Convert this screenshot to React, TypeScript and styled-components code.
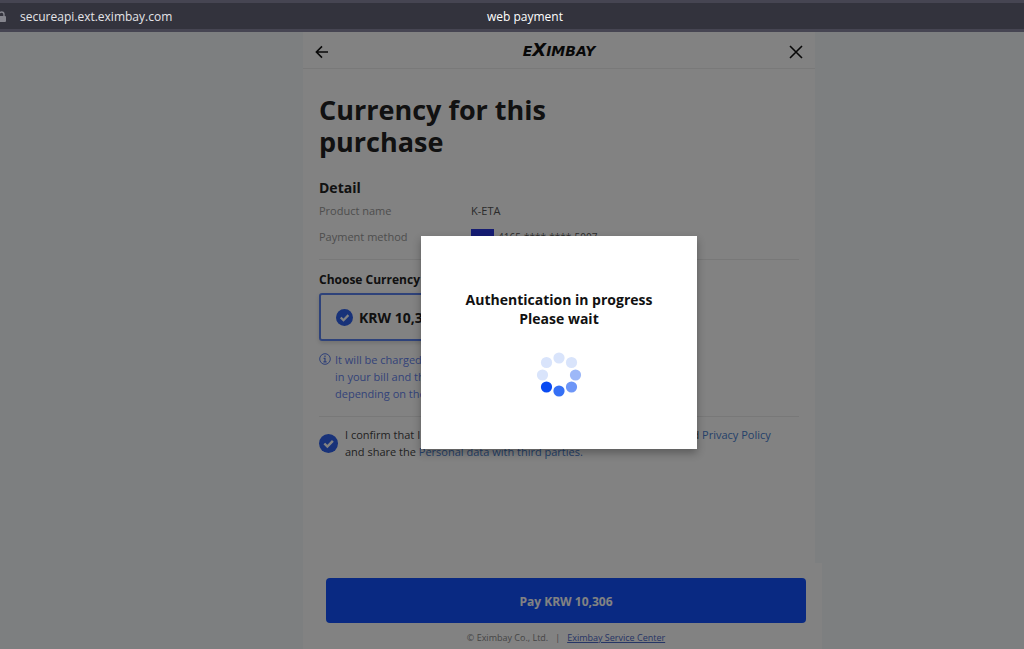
import React from "react";
import styled, { createGlobalStyle } from "styled-components";

const GlobalStyle = createGlobalStyle`
  * { box-sizing: border-box; }
  body {
    margin: 0;
    font-family: "Open Sans", "Noto Sans", sans-serif;
    color: #222;
  }
  h1, h2, p, dl, dd { margin: 0; }
`;

const Window = styled.div`
  display: flex;
  flex-direction: column;
  min-height: 100vh;
  overflow: hidden;
`;

const AddressBar = styled.header`
  display: grid;
  grid-template-columns: 1fr auto 1fr;
  align-items: center;
  height: 32px;
  padding: 2px 0 0 26px;
  border-top: 3px solid #464552;
  border-bottom: 3px solid #464552;
  background: #33333d;
  color: #e4e4e8;
  font-size: 12px;
  line-height: 16px;
`;

const Address = styled.div`
  display: flex;
  align-items: center;
  gap: 13px;
  margin-left: -27px;
`;

const TabTitle = styled.span`
  color: #fff;
`;

const Viewport = styled.div`
  position: relative;
  display: flex;
  flex: 1;
  justify-content: center;
  padding-left: 94px;
  background: #f6f9fc;
`;

const Panel = styled.main`
  display: flex;
  flex-direction: column;
  width: 100%;
  max-width: 512px;
  background: #fff;
`;

const PanelHeader = styled.div`
  display: flex;
  align-items: center;
  justify-content: space-between;
  height: 37px;
  padding: 4px 11px 0;
  border-bottom: 1px solid #eee;
`;

const IconButton = styled.button`
  display: flex;
  padding: 0;
  border: 0;
  background: none;
  color: #111;
`;

const Logo = styled.span`
  padding-bottom: 3px;
  font: italic bold 14px/18px "DejaVu Sans", sans-serif;
  color: #111;
`;

const LogoX = styled.span`
  font-size: 18px;
`;

const Content = styled.div`
  flex: 1;
  padding: 25px 16px 0;
`;

const Title = styled.h1`
  max-width: 260px;
  font-size: 27px;
  line-height: 32px;
  font-weight: 700;
`;

const SectionTitle = styled.h2<{ $small?: boolean }>`
  font-size: ${(p) => (p.$small ? 12 : 14)}px;
  line-height: 20px;
  font-weight: 700;
`;

const Section = styled.section<{ $top: number }>`
  padding-top: ${(p) => p.$top}px;
  padding-bottom: 14px;
  border-bottom: 1px solid #ececec;
`;

const Details = styled.dl`
  display: grid;
  grid-template-columns: 152px 1fr;
  row-gap: 10px;
  padding-top: 5px;
  font-size: 11px;
  line-height: 16px;
`;

const Label = styled.dt`
  color: #999;
`;

const Value = styled.dd`
  display: flex;
  gap: 4px;
  color: #555;
`;

const CardNumber = styled.span`
  font-size: 10px;
`;

const CardBadge = styled.span`
  width: 23px;
  height: 15px;
  background: #2a38e0;
`;

const CurrencyCard = styled.label`
  display: flex;
  align-items: center;
  gap: 6px;
  width: 50%;
  height: 48px;
  margin-top: 3px;
  padding: 0 15px;
  border: 2px solid #5a82f0;
  border-radius: 3px;
  font-size: 14px;
  font-weight: 700;
  box-shadow: 0 2px 4px rgba(0, 0, 0, 0.15);
`;

const Tick = styled.span`
  position: relative;
  display: flex;
  flex: none;

  input {
    position: absolute;
    inset: 0;
    margin: 0;
    width: 100%;
    height: 100%;
    opacity: 0;
  }
`;

const Notice = styled.div`
  display: flex;
  gap: 4px;
  padding-top: 10px;
  color: #6684ee;
  font-size: 11px;
  line-height: 17px;
  white-space: nowrap;

  svg { flex: none; margin-top: 2px; }
`;

const Consent = styled.div`
  display: flex;
  align-items: center;
  gap: 7px;
  padding-top: 9px;
  color: #444;
  font-size: 11px;
  line-height: 17px;
  white-space: nowrap;
`;

const TextLink = styled.a`
  color: #4a80d0;
  text-decoration: none;
`;

const Footer = styled.footer`
  margin: 0 -7px 0 7px;
  padding: 15px 16px 3px;
  background: #fff;
  text-align: center;
`;

const PayButton = styled.button`
  display: block;
  width: 100%;
  height: 45px;
  padding: 2px 0 0;
  border: 0;
  border-radius: 4px;
  background: #1252ff;
  color: #fff;
  font: 700 12px/18px "Open Sans", sans-serif;
`;

const Legal = styled.p`
  display: flex;
  justify-content: center;
  gap: 7px;
  padding-top: 7px;
  color: #888;
  font-size: 9px;
  line-height: 16px;

  a { color: #4a68c8; }
`;

const Overlay = styled.div`
  position: absolute;
  inset: 0;
  display: flex;
  align-items: center;
  justify-content: center;
  padding: 4px 0 0 94px;
  background: rgba(0, 0, 0, 0.49);
`;

const Dialog = styled.div`
  display: flex;
  flex-direction: column;
  align-items: center;
  gap: 24px;
  width: 276px;
  padding: 54px 16px 51px;
  background: #fff;
  color: #111;
  text-align: center;
  font-size: 14px;
  line-height: 19px;
  font-weight: 700;
  box-shadow: 0 4px 8px rgba(0, 0, 0, 0.3);
`;

const CheckMark = ({ size }: { size: number }) => (
  <svg width={size} height={size} viewBox="0 0 20 20" aria-hidden="true">
    <circle cx="10" cy="10" r="10" fill="#2f62ee" />
    <path d="M5.6 10l3.2 3.2 5.8-6" fill="none" stroke="#fff" strokeWidth="2.6" />
  </svg>
);

const dots: [number, number, string][] = [
  [23, 6, "#d9e4fb"],
  [35.5, 10.5, "#d9e4fb"],
  [39.5, 23, "#9db8f8"],
  [35.5, 35, "#6e96f7"],
  [23, 39, "#3570f5"],
  [10.5, 35, "#0a4bf2"],
  [6.5, 23, "#d9e4fb"],
  [10.5, 10.5, "#d9e4fb"],
];

export default function App() {
  return (
    <Window>
      <GlobalStyle />
      <AddressBar>
        <Address>
          <svg width="8" height="12" viewBox="0 0 8 12" aria-hidden="true">
            <path d="M0 5V3.5a2.5 2.5 0 0 1 5 0V5" fill="none" stroke="#85858d" strokeWidth="1.4" />
            <rect x="-2" y="5" width="9" height="6" rx="1" fill="#85858d" />
          </svg>
          secureapi.ext.eximbay.com
        </Address>
        <TabTitle>web payment</TabTitle>
      </AddressBar>
      <Viewport>
        <Panel>
          <PanelHeader>
            <IconButton aria-label="Back">
              <svg width="16" height="16" viewBox="0 0 16 16" fill="none" stroke="currentColor" strokeWidth="1.6">
                <path d="M14 8H2.5M8 2.4L2.4 8 8 13.6" />
              </svg>
            </IconButton>
            <Logo>
              E<LogoX>X</LogoX>IMBAY
            </Logo>
            <IconButton aria-label="Close">
              <svg width="16" height="16" viewBox="0 0 16 16" fill="none" stroke="currentColor" strokeWidth="1.6">
                <path d="M2 2l12 12M14 2L2 14" />
              </svg>
            </IconButton>
          </PanelHeader>
          <Content>
            <Title>Currency for this purchase</Title>
            <Section $top={20}>
              <SectionTitle>Detail</SectionTitle>
              <Details>
                <Label>Product name</Label>
                <Value>K-ETA</Value>
                <Label>Payment method</Label>
                <Value>
                  <CardBadge />
                  <CardNumber>4165-****-****-5007</CardNumber>
                </Value>
              </Details>
            </Section>
            <Section $top={10}>
              <SectionTitle $small>Choose Currency</SectionTitle>
              <CurrencyCard>
                <Tick>
                  <input type="radio" name="currency" defaultChecked />
                  <CheckMark size={17} />
                </Tick>
                KRW 10,306
              </CurrencyCard>
              <Notice>
                <svg width="12" height="12" viewBox="0 0 12 12" fill="none" stroke="#5a7cec" aria-hidden="true">
                  <circle cx="6" cy="6" r="5.3" />
                  <path d="M6 2.6v1.3M4.6 5.3H6v3.4M4.4 8.9h3.2" strokeWidth="1.2" />
                </svg>
                <p>
                  It will be charged in the selected currency
                  <br />
                  in your bill and the amount may change
                  <br />
                  depending on the exchange rate.
                </p>
              </Notice>
            </Section>
            <Consent>
              <Tick>
                <input type="checkbox" id="consent" defaultChecked />
                <CheckMark size={19} />
              </Tick>
              <label htmlFor="consent">
                I confirm that I have read and agree to the Terms and Conditions and{" "}
                <TextLink href="#privacy">Privacy Policy</TextLink>
                <br />
                and share the <TextLink href="#third-parties">Personal data with third parties.</TextLink>
              </label>
            </Consent>
          </Content>
          <Footer>
            <PayButton>Pay KRW 10,306</PayButton>
            <Legal>
              <span>© Eximbay Co., Ltd.</span>
              <span>|</span>
              <a href="#service">Eximbay Service Center</a>
            </Legal>
          </Footer>
        </Panel>
        <Overlay>
          <Dialog role="dialog" aria-modal="true">
            <p>
              Authentication in progress
              <br />
              Please wait
            </p>
            <svg width="46" height="46" viewBox="0 0 46 46" aria-hidden="true">
              {dots.map(([x, y, fill]) => (
                <circle key={`${x}-${y}`} cx={x} cy={y} r="5.6" fill={fill} />
              ))}
            </svg>
          </Dialog>
        </Overlay>
      </Viewport>
    </Window>
  );
}
